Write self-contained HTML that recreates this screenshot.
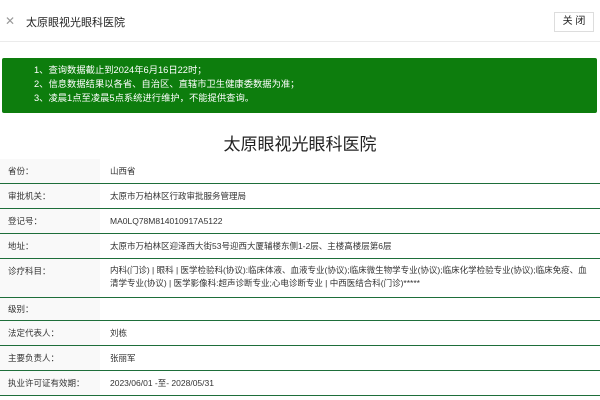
<!DOCTYPE html>
<html><head><meta charset="utf-8"><style>
*{margin:0;padding:0;box-sizing:border-box}
body{width:600px;height:400px;overflow:hidden;background:#fff;font-family:"Liberation Sans","Noto Sans CJK SC",sans-serif;color:#333;position:relative}
.hdr{position:absolute;left:0;top:0;width:600px;height:42px;border-bottom:1px solid #ebebeb}
.x{position:absolute;left:5px;top:14px;font-size:12px;color:#999}
.ht{position:absolute;left:26px;top:14px;font-size:11px;color:#222}
.btn{position:absolute;left:554px;top:12px;width:40px;height:20px;border:1px solid #ddd;font-size:10px;text-align:center;line-height:18px;color:#222}
.g{position:absolute;left:2px;top:58px;width:595px;height:55px;background:#0d7d0d;color:#fff;font-size:9.3px;line-height:14px;padding:5px 0 0 32px;border-radius:2px}
.t{position:absolute;left:0;top:130px;width:600px;text-align:center;font-size:17px;color:#222}
.row{position:absolute;left:0;width:600px;border-bottom:1.5px solid #1e6e3a;font-size:8.5px}
.row .l{position:absolute;left:0;top:0;bottom:0;width:100px;background:#f9f9f9;padding-left:8px}
.row .v{position:absolute;left:110px;top:0;right:10px;line-height:13px}
</style></head><body>
<div class="hdr"><span class="x">✕</span><span class="ht">太原眼视光眼科医院</span><div class="btn">关 闭</div></div>
<div class="g">1、查询数据截止到2024年6月16日22时；<br>2、信息数据结果以各省、自治区、直辖市卫生健康委数据为准；<br>3、凌晨1点至凌晨5点系统进行维护，不能提供查询。</div>
<div class="t">太原眼视光眼科医院</div>
<div class="row" style="top:159px;height:25px"><div class="l" style="line-height:25px">省份：</div><div class="v" style="top:6px">山西省</div></div>
<div class="row" style="top:184px;height:25px"><div class="l" style="line-height:25px">审批机关：</div><div class="v" style="top:6px">太原市万柏林区行政审批服务管理局</div></div>
<div class="row" style="top:209px;height:25px"><div class="l" style="line-height:25px">登记号：</div><div class="v" style="top:6px">MA0LQ78M814010917A5122</div></div>
<div class="row" style="top:234px;height:25px"><div class="l" style="line-height:25px">地址：</div><div class="v" style="top:6px">太原市万柏林区迎泽西大街53号迎西大厦辅楼东侧1-2层、主楼高楼层第6层</div></div>
<div class="row" style="top:259px;height:39px"><div class="l" style="padding-top:6px">诊疗科目：</div><div class="v" style="top:5px">内科(门诊) | 眼科 | 医学检验科(协议):临床体液、血液专业(协议);临床微生物学专业(协议);临床化学检验专业(协议);临床免疫、血清学专业(协议) | 医学影像科:超声诊断专业;心电诊断专业 | 中西医结合科(门诊)*****</div></div>
<div class="row" style="top:298px;height:23px"><div class="l" style="line-height:23px">级别：</div></div>
<div class="row" style="top:321px;height:25px"><div class="l" style="line-height:25px">法定代表人：</div><div class="v" style="top:6px">刘栋</div></div>
<div class="row" style="top:346px;height:25px"><div class="l" style="line-height:25px">主要负责人：</div><div class="v" style="top:6px">张丽军</div></div>
<div class="row" style="top:371px;height:25px"><div class="l" style="line-height:25px">执业许可证有效期：</div><div class="v" style="top:6px">2023/06/01 -至- 2028/05/31</div></div>
</body></html>
